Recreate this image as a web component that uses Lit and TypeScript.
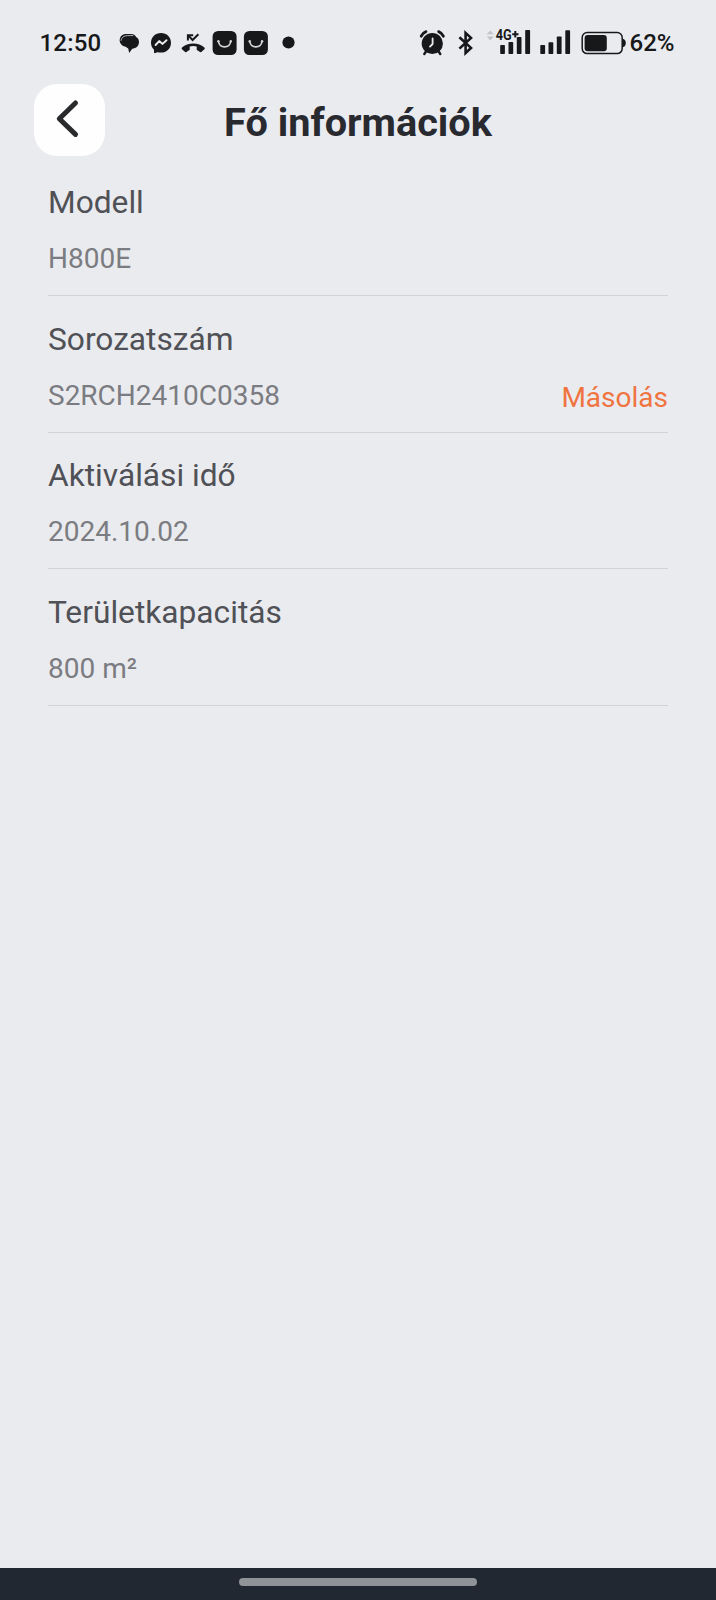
import { LitElement, html, css, svg, nothing } from "lit";
import { customElement, property } from "lit/decorators.js";

@customElement("status-bar")
class StatusBar extends LitElement {
  static styles = css`
    :host {
      display: flex;
      justify-content: space-between;
      height: 26px;
      padding: 30px 38.5px 0 39.5px;
      color: #17181a;
      font: 500 24px/26px Roboto, sans-serif;
    }
    .group {
      display: flex;
    }
    .time {
      width: 76px;
      letter-spacing: 0.2px;
    }
    svg {
      display: block;
      height: 26px;
      fill: currentColor;
      overflow: visible;
    }
    .line {
      fill: none;
      stroke: currentColor;
      stroke-linecap: round;
      stroke-linejoin: round;
    }
    .sharp {
      fill: none;
      stroke: currentColor;
    }
    .light {
      fill: none;
      stroke: #ececef;
      stroke-linecap: round;
      stroke-linejoin: round;
    }
    .smile {
      fill: none;
      stroke: #d4d5d8;
      stroke-linecap: round;
    }
    .faint {
      fill: #c3c4c7;
    }
    .net {
      font: 700 14.2px Roboto, sans-serif;
    }
    .level {
      width: 48px;
      white-space: nowrap;
    }
  `;

  private icon(width: number, body: unknown) {
    return html`<svg width=${width} viewBox="0 0 ${width} 26">${body}</svg>`;
  }

  private bag() {
    return svg`
      <rect x="1" y="1" width="24" height="24" rx="5.5"></rect>
      <path class="smile" stroke-width="1.6" d="M6.9 11.6C8.2 18.6 17.8 18.6 19.1 11.6"></path>
      <circle cx="6.8" cy="11.2" r="1.2" fill="#d4d5d8"></circle>
      <circle cx="19.2" cy="11.2" r="1.2" fill="#d4d5d8"></circle>`;
  }

  render() {
    return html`
      <div class="group">
        <span class="time">12:50</span>
        ${this.icon(32, svg`
          <path d="M10 4H14.5C18 4 20 5.5 20 8L9 16.5C6 16 3.7 13.3 3.7 10.2C3.7 6.5 6.5 4 10 4Z"></path>
          <path d="M12.4 6H16.2C20.3 6 23 8.4 23 12C23 15.8 20.3 18.4 16.2 18.7L13.2 23L12.2 18.6L5.6 14V12C5.6 8.2 8.4 6 12.4 6Z"></path>
          <path class="light" stroke-width=".7" d="M5 10.5C5.4 7.4 8 5.6 11.5 5.6H17"></path>`)}
        ${this.icon(32, svg`
          <path d="M13 3C7.3 3 3 7.1 3 12.7C3 15.7 4.2 18 6 19.7V22.4C6 23.1 6.6 23.4 7.2 23.1L9.4 22.2C10.5 22.5 11.7 22.6 13 22.6C18.7 22.6 23 18.4 23 12.7C23 7.1 18.7 3 13 3Z"></path>
          <path d="M7.6 15L11.2 11.1L14.6 13.9L18.5 10.2" class="light" stroke-width="1.9"></path>`)}
        ${this.icon(29, svg`
          <path d="M13.2 13.4C8.8 13.4 5 14.8 2 17.5C1.5 18 1.5 18.7 2 19.2L4.8 21.8C5.3 22.3 6 22.3 6.5 21.9C7.4 21.2 8.2 20.8 9.1 20.3C9.5 20 9.7 19.7 9.7 19.2V16.6C12 15.9 14.4 15.9 16.7 16.6V19.2C16.7 19.7 16.9 20 17.3 20.3C18.2 20.8 19 21.2 19.9 21.9C20.4 22.3 21.1 22.3 21.6 21.8L24.4 19.2C24.9 18.7 24.9 18 24.4 17.5C21.4 14.8 17.6 13.4 13.2 13.4Z"></path>
          <path class="sharp" stroke-width="2" d="M7.9 10.4V5.2H13.2M8.3 5.6L12.6 10L18.4 4.3"></path>`)}
        ${this.icon(31.5, svg`<g transform="translate(2.6 0)">${this.bag()}</g>`)}
        ${this.icon(31.5, svg`<g transform="translate(2.9 0)">${this.bag()}</g>`)}
        ${this.icon(32, svg`<circle cx="16.5" cy="12.5" r="6.1"></circle>`)}
      </div>
      <div class="group">
        ${this.icon(37, svg`
          <g transform="translate(-2 0)">
            <circle cx="13.3" cy="13.5" r="10.6"></circle>
            <path class="line" stroke-width="2.8" d="M2.2 6.2C3.2 4 4.8 2.4 7 1.6M24.4 6.2C23.4 4 21.8 2.4 19.6 1.6"></path>
            <path class="line" stroke-width="2.4" d="M7 21.5L5.3 24M19.6 21.5L21.3 24"></path>
            <path class="light" stroke-width="1.8" d="M13.6 8.4V14L11 16.6"></path>
          </g>`)}
        ${this.icon(29, svg`
          <path class="sharp" transform="translate(-1.2 0)" stroke-width="2.6" d="M2.6 7.2L14.2 17.9L8.8 22.9V2.9L14.2 7.9L2.6 18.6"></path>`)}
        ${this.icon(51, svg`
          <g transform="translate(-1.2 0)">
            <path class="faint" d="M.9 4.2L4.5 .4L8.1 4.2ZM.9 6.6H8.1L4.5 10.4Z"></path>
            <text class="net" x="10" y="10.4" textLength="16" lengthAdjust="spacingAndGlyphs">4G</text>
            <path d="M26.4 3.2H28.5V1H30.5V3.2H32.7V5.2H30.5V7.4H28.5V5.2H26.4Z"></path>
            <rect x="14.4" y="15" width="4.7" height="9" rx=".8"></rect>
            <rect x="22.7" y="12" width="4.7" height="12" rx=".8"></rect>
            <rect x="31" y="7" width="4.7" height="17" rx=".8"></rect>
            <rect x="39.4" y="0" width="4.9" height="24" rx=".8"></rect>
          </g>`)}
        ${this.icon(43, svg`
          <g transform="translate(-.7 0)">
            <rect x="3" y="15" width="4.8" height="9" rx=".8"></rect>
            <rect x="11.2" y="12.2" width="4.8" height="11.8" rx=".8"></rect>
            <rect x="19.5" y="6.5" width="4.8" height="17.5" rx=".8"></rect>
            <rect x="28" y="0.2" width="4.8" height="23.8" rx=".8"></rect>
          </g>`)}
        ${this.icon(49, svg`
          <rect x="1.2" y="2.6" width="40" height="21" rx="5" fill="none" stroke="currentColor" stroke-width="1.5"></rect>
          <rect x="3.6" y="4.9" width="22.2" height="16.4" rx="3"></rect>
          <path d="M41.6 8.8Q44.8 9.5 44.8 13T41.6 17.2Z"></path>`)}
        <span class="level">62%</span>
      </div>
    `;
  }
}

@customElement("info-row")
class InfoRow extends LitElement {
  @property() label = "";
  @property() value = "";
  @property() action = "";

  static styles = css`
    :host {
      display: block;
      box-sizing: border-box;
      height: 136.67px;
      padding-top: 23.7px;
      border-bottom: 1px solid #d1d3d7;
    }
    .label {
      font-size: 31.7px;
      line-height: 40px;
      color: #505156;
    }
    .detail {
      display: flex;
      justify-content: space-between;
      margin-top: 19.1px;
      font-size: 28px;
      line-height: 34px;
      color: #7b7c81;
    }
    .action {
      padding-top: 2px;
      color: #f0743f;
    }
  `;

  render() {
    return html`
      <div class="label">${this.label}</div>
      <div class="detail">
        <span>${this.value}</span>
        ${this.action ? html`<span class="action">${this.action}</span>` : nothing}
      </div>
    `;
  }
}

@customElement("app-root")
class AppRoot extends LitElement {
  static styles = css`
    :host {
      display: flex;
      flex-direction: column;
      height: 1600px;
      background: #eaebef;
      font-family: Roboto, "Noto Sans", sans-serif;
    }
    .header {
      display: grid;
      grid-template-columns: 72px 1fr 72px;
      align-items: center;
      padding: 28px 34px 0;
      height: 72px;
    }
    .back {
      display: grid;
      place-items: center;
      width: 71px;
      height: 72px;
      padding: 0;
      border: 0;
      border-radius: 23px;
      background: #fefefe;
    }
    .title {
      margin: 0;
      padding-top: 6px;
      text-align: center;
      font-size: 39.7px;
      line-height: 48px;
      font-weight: 700;
      color: #292a2f;
    }
    .list {
      flex: 1;
      padding: 3.2px 48px 0;
    }
    .nav {
      display: flex;
      justify-content: center;
      height: 22px;
      padding-top: 10px;
      background: #222832;
    }
    .handle {
      width: 238px;
      height: 8px;
      border-radius: 4px;
      background: #909398;
    }
  `;

  render() {
    return html`
      <status-bar></status-bar>
      <header class="header">
        <button class="back" aria-label="Vissza">
          <svg width="71" height="72" viewBox="0 0 71 72">
            <path d="M41.5 19L25.3 34.7L41.5 50.4" fill="none" stroke="#292a2c" stroke-width="5" stroke-linecap="round" stroke-linejoin="round"></path>
          </svg>
        </button>
        <h1 class="title">Fő információk</h1>
      </header>
      <main class="list">
        <info-row label="Modell" value="H800E"></info-row>
        <info-row label="Sorozatszám" value="S2RCH2410C0358" action="Másolás"></info-row>
        <info-row label="Aktiválási idő" value="2024.10.02"></info-row>
        <info-row label="Területkapacitás" value="800 m²"></info-row>
      </main>
      <footer class="nav"><div class="handle"></div></footer>
    `;
  }
}
